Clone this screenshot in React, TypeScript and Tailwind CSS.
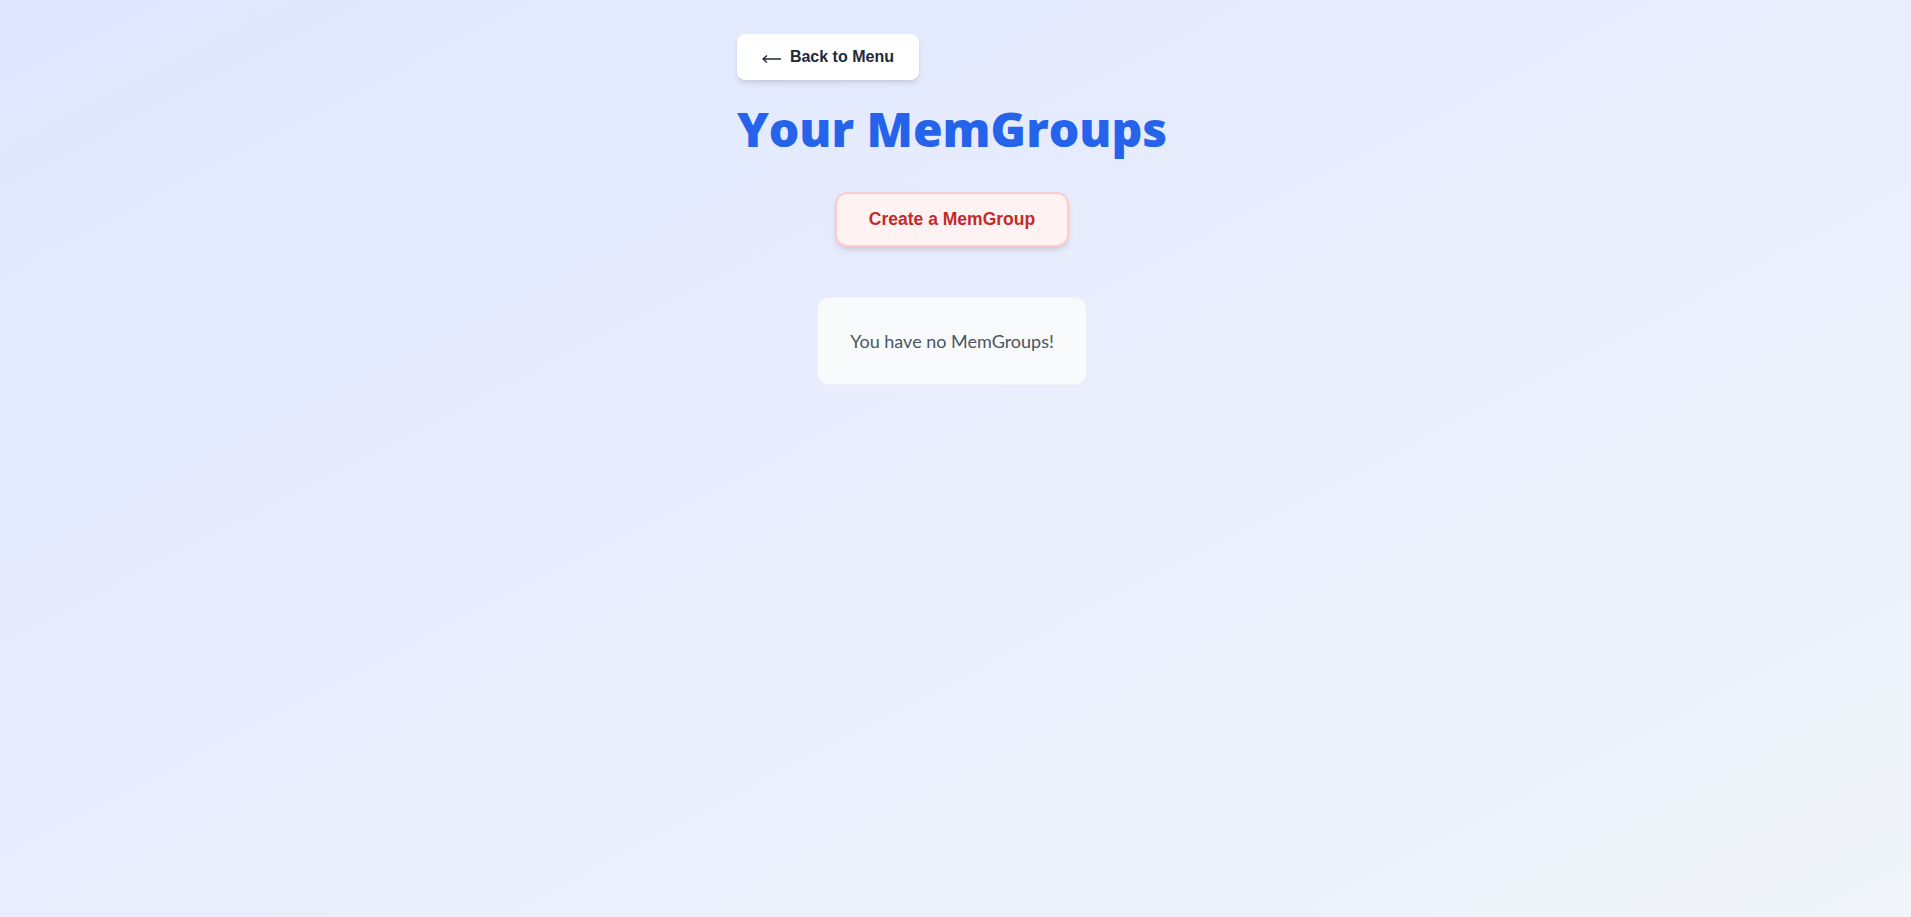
export default function App() {
  const groups: string[] = []

  return (
    <div className="min-h-[990px] w-screen bg-linear-to-br from-[#e0e7ff] to-[#f1f5f9] pt-[34px] pr-[7px]">
      <div className="flex flex-col items-center">
        <div className="flex w-fit flex-col">
          <button className="flex items-center gap-[9px] self-start rounded-lg border border-white bg-white px-6 py-2.5 font-['Liberation_Sans',Arial,sans-serif] text-base leading-6 font-bold text-[#1f2937] shadow-md">
            <svg width={19} height={10} viewBox="0 0 19 10" fill="none" stroke="currentColor" strokeWidth={1.3} aria-hidden className="mt-[3px]">
              <path d="M1 5h18M5 1.5 1 5l4 3.5" />
            </svg>
            <span>Back to Menu</span>
          </button>
          <h1 className="mt-[25px] font-['Open_Sans',sans-serif] text-5xl leading-none font-extrabold text-[#2563eb]">
            Your MemGroups
          </h1>
        </div>

        <button className="mt-[39px] rounded-xl border-2 border-[#fecaca] bg-[#fef2f2] px-8 py-[13px] font-['Liberation_Sans',Arial,sans-serif] text-[17.5px] leading-[25px] font-bold text-[#c52a2a] shadow-md">
          Create a MemGroup
        </button>

        <div className="mt-[50px] rounded-xl border border-[#eef2f7] bg-[#f8fafc] px-8 py-[31px] font-['Lato',sans-serif] text-lg leading-6 text-[#4b5563]">
          {groups.length === 0 ? 'You have no MemGroups!' : null}
        </div>
      </div>
    </div>
  )
}
